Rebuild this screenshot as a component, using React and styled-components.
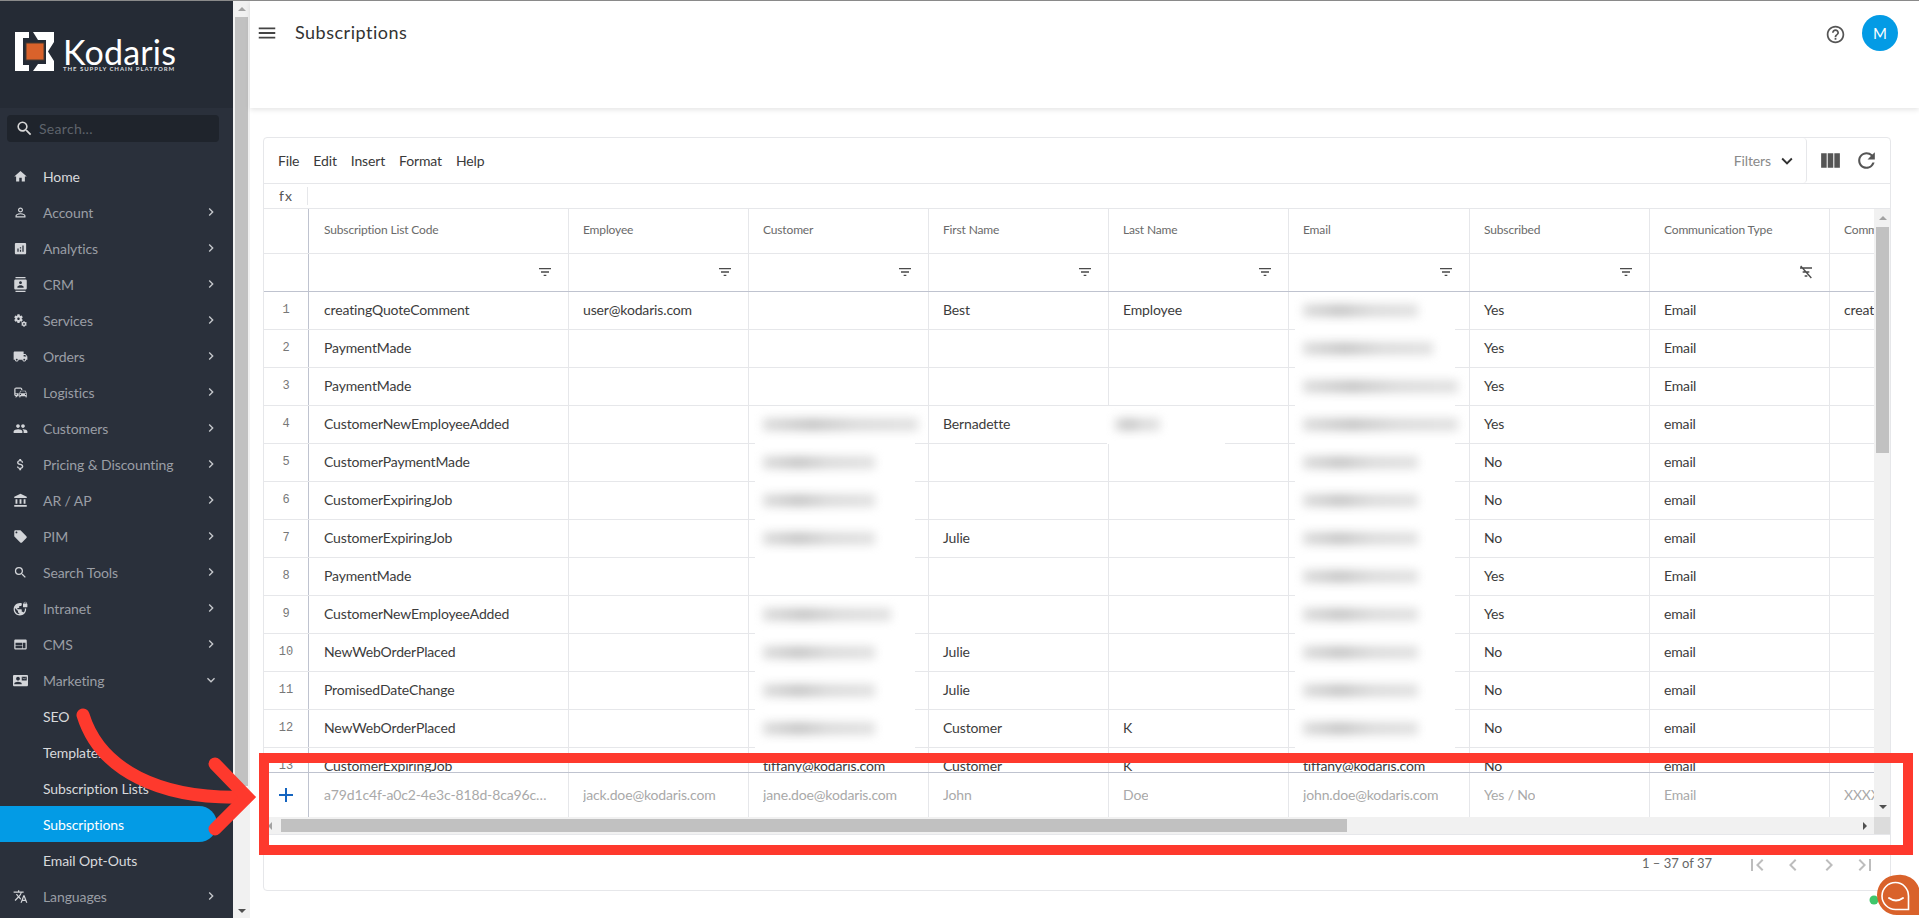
import React from "react";
import styled, { createGlobalStyle } from "styled-components";
import {
  MdHome, MdPermIdentity, MdAnalytics, MdContacts, MdMiscellaneousServices, MdLocalShipping,
  MdCommute, MdPeople, MdAttachMoney, MdAccountBalance, MdLocalOffer, MdSearch, MdVpnLock,
  MdWeb, MdContactMail, MdTranslate, MdKeyboardArrowRight, MdKeyboardArrowDown, MdMenu,
  MdHelpOutline, MdViewColumn, MdRefresh, MdFilterList, MdFirstPage, MdLastPage,
  MdChevronLeft, MdChevronRight, MdExpandMore, MdAdd,
} from "react-icons/md";

const FONT = `Lato, "Noto Sans", sans-serif`;
const LINE = "#e6e7ea";
const STRONG = "#bfc3cf";

const Global = createGlobalStyle`
  html, body { margin: 0; height: 100%; overflow: hidden; background: #fff; }
  body { font-family: ${FONT}; font-size: 14px; color: #333; }
  * { box-sizing: border-box; }
`;

const Page = styled.div`
  position: relative;
  display: flex;
  height: 918px;
  width: 1919px;
  border-top: 1px solid #8a8a8a;
  overflow: hidden;
`;

const Sidebar = styled.aside`
  width: 233px;
  flex: none;
  background: #2a303b;
  display: flex;
  flex-direction: column;
`;
const Brand = styled.div`
  height: 107px;
  background: #252b35;
  padding: 31px 0 0 15px;
  display: flex;
  gap: 8px;
  flex: none;
`;
const BrandText = styled.div`
  display: flex;
  flex-direction: column;
  color: #fff;
`;
const BrandName = styled.span`
  font-size: 34px;
  line-height: 24px;
  margin-top: 8px;
  letter-spacing: 0.2px;
`;
const BrandTag = styled.span`
  font-size: 6px;
  line-height: 6px;
  margin-top: 2px;
  letter-spacing: 0.95px;
  white-space: nowrap;
  color: #d5d7db;
  font-weight: 700;
`;
const SearchBox = styled.div`
  margin: 7px 14px 0 7px;
  height: 27px;
  border-radius: 4px;
  background: #1f242c;
  display: flex;
  align-items: center;
  padding-left: 8px;
  gap: 5px;
  color: #d8d8d8;
  flex: none;
  font-size: 14px;
  span { color: #5e636b; letter-spacing: .3px; }
`;
const Nav = styled.nav`
  margin-top: 16px;
  display: flex;
  flex-direction: column;
`;
const NavRow = styled.div`
  height: 36px;
  display: flex;
  align-items: center;
  padding-left: ${p => (p.$sub ? 43 : 12)}px;
  width: 217px;
  position: relative;
  color: ${p => p.$color};
  background: ${p => (p.$active ? "#039be5" : "transparent")};
  border-radius: 0 18px 18px 0;
  font-size: 14px;
  letter-spacing: -0.1px;
  white-space: nowrap;
`;
const NavIcon = styled.span`
  width: 31px;
  display: flex;
  color: #d3d5d9;
  svg { width: 15px; height: 15px; margin-left: 1px; }
`;
const NavChevron = styled.span`
  position: absolute;
  left: 203px;
  top: 10px;
  display: flex;
  color: #c6c8cc;
`;

const Rail = styled.div`
  width: 17px;
  flex: none;
  background: #f1f1f1;
  display: flex;
  flex-direction: column;
  align-items: center;
  justify-content: space-between;
  position: relative;
`;
const Thumb = styled.div`
  background: #c1c1c1;
  ${p => (p.$horizontal ? "height: 13px;" : "width: 13px;")}
`;
const Arrow = styled.i`
  width: 0;
  height: 0;
  display: block;
  flex: none;
  border-style: solid;
  ${p => {
    const c = p.$muted ? "#a3a3a3" : "#505050";
    if (p.$dir === "up") return `border-width: 0 4px 4px; border-color: transparent transparent ${c};`;
    if (p.$dir === "down") return `border-width: 4px 4px 0; border-color: ${c} transparent transparent;`;
    if (p.$dir === "left") return `border-width: 4px 4px 4px 0; border-color: transparent ${c} transparent transparent;`;
    return `border-width: 4px 0 4px 4px; border-color: transparent transparent transparent ${c};`;
  }}
`;
const RailTop = styled.div`
  display: flex;
  flex-direction: column;
  align-items: center;
  gap: 6px;
  padding-top: 6px;
`;
const RailBottom = styled.div`
  padding-bottom: 5px;
`;

const Main = styled.main`
  flex: 1;
  min-width: 0;
  display: flex;
  flex-direction: column;
`;
const Topbar = styled.header`
  height: 107px;
  flex: none;
  display: flex;
  align-items: flex-start;
  padding: 20px 21px 0 6px;
  box-shadow: 0 2px 5px rgba(0, 0, 0, 0.1);
  position: relative;
`;
const MenuBtn = styled.span`
  display: flex;
  color: #444;
  margin: 0 17px 0 0;
  svg { width: 22px; height: 22px; }
  padding-top: 1px;
`;
const Title = styled.h1`
  margin: -1px 0 0;
  font-size: 18px;
  line-height: 24px;
  font-weight: 400;
  letter-spacing: 0.5px;
  color: #333;
`;
const TopRight = styled.div`
  margin-left: auto;
  display: flex;
  align-items: flex-start;
  gap: 16px;
  margin-top: -6px;
`;
const Help = styled.span`
  display: flex;
  color: #555;
  margin-top: 9px;
  svg { width: 21px; height: 21px; }
`;
const Avatar = styled.div`
  width: 36px;
  height: 36px;
  border-radius: 50%;
  background: #039be5;
  color: #fff;
  display: flex;
  align-items: center;
  justify-content: center;
  font-size: 15px;
`;

const Card = styled.section`
  margin: 29px 28px 0 13px;
  height: 754px;
  border: 1px solid ${LINE};
  border-radius: 4px;
  display: flex;
  flex-direction: column;
  overflow: hidden;
`;
const Toolbar = styled.div`
  height: 46px;
  flex: none;
  display: flex;
  align-items: center;
  border-bottom: 1px solid ${LINE};
`;
const MenuList = styled.div`
  flex: 1;
  display: flex;
  align-items: center;
  gap: 14px;
  padding: 0 0 1px 14px;
  font-size: 14px;
  letter-spacing: -0.15px;
  color: #3a3a3a;
`;
const Filters = styled.div`
  display: flex;
  align-items: center;
  gap: 5px;
  height: 100%;
  padding-right: 8px;
  color: #8a8a8a;
  letter-spacing: -0.1px;
  border-right: 1px solid ${LINE};
  border-radius: 0 4px 4px 0;
  svg { color: #333; }
`;
const ToolIcons = styled.div`
  width: 83px;
  display: flex;
  align-items: center;
  gap: 11px;
  padding-left: 11px;
  color: #555;
  svg { width: 25px; height: 25px; }
`;
const FormulaBar = styled.div`
  height: 25px;
  flex: none;
  display: flex;
  align-items: center;
  border-bottom: 1px solid ${LINE};
`;
const Fx = styled.span`
  width: 44px;
  height: 18px;
  font-size: 14px;
  line-height: 18px;
  padding-left: 15px;
  color: #555;
  border-right: 1px solid ${LINE};
  letter-spacing: 1px;
`;

const GridWrap = styled.div`
  height: 625px;
  flex: none;
  display: grid;
  grid-template-columns: 1610px 17px;
  grid-template-rows: 608px 17px;
`;
const GridView = styled.div`
  display: flex;
  flex-direction: column;
  overflow: hidden;
`;
const Row = styled.div`
  display: flex;
  flex: none;
  height: ${p => p.$h}px;
  border-bottom: 1px solid ${p => (p.$strong ? STRONG : LINE)};
  ${p => p.$topStrong && `border-top: 1px solid ${STRONG};`}
  ${p => p.$flat && "border-bottom: none;"}
`;
const RowsClip = styled.div`
  height: 480px;
  flex: none;
  overflow: hidden;
`;
const NumCell = styled.div`
  width: 45px;
  flex: none;
  border-right: 1px solid ${STRONG};
  display: flex;
  align-items: center;
  justify-content: center;
  padding-bottom: 1px;
  font-size: 12px;
  font-family: "Liberation Mono", monospace;
  color: #777;
  svg { color: #1565c0; width: 24px; height: 24px; }
`;
const Cell = styled.div`
  width: ${p => p.$w}px;
  flex: none;
  position: relative;
  border-right: 1px solid ${LINE};
  padding: 0 15px ${p => (p.$head ? 3 : 2)}px ${p => (p.$first ? 15 : 14)}px;
  display: flex;
  align-items: center;
  font-size: ${p => (p.$head ? 12 : 14)}px;
  letter-spacing: -0.15px;
  color: ${p => (p.$head ? "#6a6a6a" : p.$ghost ? "#a9a9a9" : "#3c3c3c")};
  white-space: nowrap;
  overflow: hidden;
  ${p => p.$blurred && "overflow: visible;"}
  ${p => p.$last && "border-right: none; padding-right: 0;"}
`;
const Ellipsis = styled.span`
  overflow: hidden;
  text-overflow: ${p => (p.$clip ? "clip" : "ellipsis")};
`;
const FilterMark = styled.span`
  position: absolute;
  right: 15px;
  top: 10px;
  display: flex;
  color: #4a4a4a;
  svg { width: 16px; height: 16px; }
`;
const BlurPatch = styled.span`
  position: absolute;
  z-index: 2;
  left: ${p => p.$left}px;
  width: ${p => p.$w}px;
  top: 0;
  height: 38px;
  background: #fff;
  &::after {
    content: "";
    position: absolute;
    left: 8px;
    top: 12px;
    height: 13px;
    width: ${p => p.$ink}px;
    background: linear-gradient(90deg, #c8c8c8, #a2a2a2 32%, #c4c4c4 60%, #cdcdcd);
    opacity: .6;
    filter: blur(5px);
  }
`;

const VBar = styled.div`
  background: #f1f1f1;
  display: flex;
  flex-direction: column;
  align-items: center;
  justify-content: space-between;
`;
const VStart = styled.div`
  display: flex;
  flex-direction: column;
  align-items: center;
  gap: 7px;
  padding-top: 7px;
`;
const VEnd = styled.div`
  padding-bottom: 8px;
`;
const HBar = styled.div`
  background: #f1f1f1;
  display: flex;
  align-items: center;
  gap: 5px;
  padding: 0 7px 0 4px;
  justify-content: space-between;
`;
const HStart = styled.div`
  display: flex;
  align-items: center;
  gap: 9px;
`;
const Corner = styled.div`
  background: #dcdcdc;
`;
const Pager = styled.div`
  flex: 1;
  border-top: 1px solid ${LINE};
  display: flex;
  align-items: center;
  justify-content: flex-end;
  padding: 0 13px 0 0;
  color: #666;
  font-size: 13px;
`;
const PagerLabel = styled.span`
  margin: 0 33px 0 0;
`;
const PagerIcons = styled.div`
  display: flex;
  gap: 12px;
  padding-top: 4px;
  color: #bdbdbd;
  svg { width: 24px; height: 24px; display: block; }
`;

const Overlay = styled.svg`
  position: absolute;
  left: 0;
  top: -1px;
  width: 1919px;
  height: 918px;
  pointer-events: none;
  z-index: 5;
`;
const Chat = styled.svg`
  position: absolute;
  right: 0;
  bottom: 0;
  z-index: 6;
`;

const NAV = [
  [MdHome, "Home", "#d8d9dc", false],
  [MdPermIdentity, "Account", "#9a9ea5", true],
  [MdAnalytics, "Analytics", "#9a9ea5", true],
  [MdContacts, "CRM", "#9a9ea5", true],
  [MdMiscellaneousServices, "Services", "#9a9ea5", true],
  [MdLocalShipping, "Orders", "#9a9ea5", true],
  [MdCommute, "Logistics", "#9a9ea5", true],
  [MdPeople, "Customers", "#9a9ea5", true],
  [MdAttachMoney, "Pricing & Discounting", "#9a9ea5", true],
  [MdAccountBalance, "AR / AP", "#9a9ea5", true],
  [MdLocalOffer, "PIM", "#9a9ea5", true],
  [MdSearch, "Search Tools", "#9a9ea5", true],
  [MdVpnLock, "Intranet", "#9a9ea5", true],
  [MdWeb, "CMS", "#9a9ea5", true],
];
const SUB = [
  ["SEO", "#d8d9dc"],
  ["Templates", "#d8d9dc"],
  ["Subscription Lists", "#d8d9dc"],
  ["Subscriptions", "#ffffff", true],
  ["Email Opt-Outs", "#d8d9dc"],
];

const WIDTHS = [260, 180, 180, 180, 180, 181, 180, 180, 45];
const HEADS = ["Subscription List Code", "Employee", "Customer", "First Name", "Last Name", "Email", "Subscribed", "Communication Type", "Comm"];
// [code, employee, customer, first, last, email, subscribed, type, extra]; numbers are the width of a blurred value
const ROWS = [
  ["creatingQuoteComment", "user@kodaris.com", null, "Best", "Employee", 115, "Yes", "Email", "creat"],
  ["PaymentMade", null, null, null, null, 130, "Yes", "Email"],
  ["PaymentMade", null, null, null, null, 155, "Yes", "Email"],
  ["CustomerNewEmployeeAdded", null, 155, "Bernadette", -45, 155, "Yes", "email"],
  ["CustomerPaymentMade", null, 112, null, null, 115, "No", "email"],
  ["CustomerExpiringJob", null, 112, null, null, 115, "No", "email"],
  ["CustomerExpiringJob", null, 112, "Julie", null, 115, "No", "email"],
  ["PaymentMade", null, null, null, null, 115, "Yes", "Email"],
  ["CustomerNewEmployeeAdded", null, 128, null, null, 115, "Yes", "email"],
  ["NewWebOrderPlaced", null, 112, "Julie", null, 115, "No", "email"],
  ["PromisedDateChange", null, 112, "Julie", null, 115, "No", "email"],
  ["NewWebOrderPlaced", null, 112, "Customer", "K", 115, "No", "email"],
  ["CustomerExpiringJob", null, "tiffany@kodaris.com", "Customer", "K", "tiffany@kodaris.com", "No", "email"],
];
const GHOST = ["a79d1c4f-a0c2-4e3c-818d-8ca96c8f21d0", "jack.doe@kodaris.com", "jane.doe@kodaris.com", "John", "Doe", "john.doe@kodaris.com", "Yes / No", "Email", "XXXXXX"];

const FilterOff = () => (
  <svg viewBox="0 0 24 24" fill="none" stroke="currentColor" strokeWidth="2">
    <path d="M3 6h18M7 12h10M10 18h4M4 3l16 18" />
  </svg>
);

const Logo = () => (
  <svg width="40" height="40" viewBox="0 0 40 40">
    <path fill="#fff" d="M0 0h14v6H8v27h6v6H0z" />
    <path fill="#fff" d="M18 0h21v10l-6 9.5 6 9.5v10H18l5-7h8V8h-8z" />
    <rect x="11" y="11" width="18" height="17" fill="#d9622b" stroke="#4a3a30" strokeWidth="1" />
  </svg>
);

function renderCell(value, i, isLast) {
  if (typeof value === "number") {
    const small = value < 0;
    return (
      <Cell key={i} $w={WIDTHS[i]} $blurred $last={isLast}>
        <BlurPatch $left={small ? -2 : 6} $w={small ? 118 : 160} $ink={Math.abs(value)} />
      </Cell>
    );
  }
  return <Cell key={i} $w={WIDTHS[i]} $first={i === 0} $last={isLast}>{value}</Cell>;
}

export default function App() {
  return (
    <Page>
      <Global />
      <Sidebar>
        <Brand>
          <Logo />
          <BrandText>
            <BrandName>Kodaris</BrandName>
            <BrandTag>THE SUPPLY CHAIN PLATFORM</BrandTag>
          </BrandText>
        </Brand>
        <SearchBox>
          <MdSearch size={19} />
          <span>Search...</span>
        </SearchBox>
        <Nav>
          {NAV.map(([Icon, label, color, more]) => (
            <NavRow key={label} $color={color}>
              <NavIcon><Icon /></NavIcon>
              {label}
              {more && <NavChevron><MdKeyboardArrowRight size={16} /></NavChevron>}
            </NavRow>
          ))}
          <NavRow $color="#9a9ea5">
            <NavIcon><MdContactMail /></NavIcon>
            Marketing
            <NavChevron><MdKeyboardArrowDown size={16} /></NavChevron>
          </NavRow>
          {SUB.map(([label, color, active]) => (
            <NavRow key={label} $sub $color={color} $active={active}>{label}</NavRow>
          ))}
          <NavRow $color="#9a9ea5">
            <NavIcon><MdTranslate /></NavIcon>
            Languages
            <NavChevron><MdKeyboardArrowRight size={16} /></NavChevron>
          </NavRow>
        </Nav>
      </Sidebar>
      <Rail>
        <RailTop>
          <Arrow $dir="up" $muted />
          <Thumb style={{ height: 769 }} />
        </RailTop>
        <RailBottom><Arrow $dir="down" /></RailBottom>
      </Rail>
      <Main>
        <Topbar>
          <MenuBtn><MdMenu /></MenuBtn>
          <Title>Subscriptions</Title>
          <TopRight>
            <Help><MdHelpOutline /></Help>
            <Avatar>M</Avatar>
          </TopRight>
        </Topbar>
        <Card>
          <Toolbar>
            <MenuList>
              <span>File</span><span>Edit</span><span>Insert</span><span>Format</span><span>Help</span>
            </MenuList>
            <Filters>Filters <MdExpandMore size={22} /></Filters>
            <ToolIcons><MdViewColumn /><MdRefresh /></ToolIcons>
          </Toolbar>
          <FormulaBar><Fx>fx</Fx></FormulaBar>
          <GridWrap>
            <GridView>
              <Row $h={45}>
                <NumCell />
                {HEADS.map((h, i) => (
                  <Cell key={h} $w={WIDTHS[i]} $head $first={i === 0} $last={i === 8}>{h}</Cell>
                ))}
              </Row>
              <Row $h={38} $strong>
                <NumCell />
                {WIDTHS.map((w, i) => (
                  <Cell key={i} $w={w} $last={i === 8}>
                    {i < 8 && <FilterMark>{i === 7 ? <FilterOff /> : <MdFilterList />}</FilterMark>}
                  </Cell>
                ))}
              </Row>
              <RowsClip>
                {ROWS.map((r, n) => (
                  <Row key={n} $h={38}>
                    <NumCell>{n + 1}</NumCell>
                    {WIDTHS.map((_, i) => renderCell(r[i] ?? null, i, i === 8))}
                  </Row>
                ))}
              </RowsClip>
              <Row $h={45} $topStrong $flat>
                <NumCell><MdAdd /></NumCell>
                {GHOST.map((g, i) => (
                  <Cell key={i} $w={WIDTHS[i]} $ghost $first={i === 0} $last={i === 8}>
                    <Ellipsis $clip={i === 8}>{g}</Ellipsis>
                  </Cell>
                ))}
              </Row>
            </GridView>
            <VBar>
              <VStart>
                <Arrow $dir="up" $muted />
                <Thumb style={{ height: 226 }} />
              </VStart>
              <VEnd><Arrow $dir="down" /></VEnd>
            </VBar>
            <HBar>
              <HStart>
                <Arrow $dir="left" $muted />
                <Thumb $horizontal style={{ width: 1066 }} />
              </HStart>
              <Arrow $dir="right" />
            </HBar>
            <Corner />
          </GridWrap>
          <Pager>
            <PagerLabel>1 – 37 of 37</PagerLabel>
            <PagerIcons>
              <MdFirstPage /><MdChevronLeft /><MdChevronRight /><MdLastPage />
            </PagerIcons>
          </Pager>
        </Card>
      </Main>
      <Overlay viewBox="0 0 1919 918">
        <rect x="264" y="758" width="1644" height="92" fill="none" stroke="#fe392d" strokeWidth="10" />
        <path d="M83 715C100 770 160 800 246 797" fill="none" stroke="#fe392d" strokeWidth="13" strokeLinecap="round" />
        <path d="M215 764L247 797L215 829" fill="none" stroke="#fe392d" strokeWidth="13" strokeLinecap="round" strokeLinejoin="miter" />
      </Overlay>
      <Chat width="50" height="44" viewBox="0 0 50 44">
        <circle cx="5" cy="26" r="6.5" fill="#fff" />
        <circle cx="5" cy="26" r="4.5" fill="#3fc66b" />
        <path d="M28 1A20 20 0 0 0 8 21A20 20 0 0 0 28 41H50V14A20 20 0 0 0 28 1Z" fill="#d9622b" />
        <path d="M26.5 8.5a13.5 13.5 0 1 0 0 27H39.5V22a13 13.5 0 0 0-13-13.5z" fill="none" stroke="#fff" strokeWidth="1.6" />
        <path d="M20 24q7 5 14 0" fill="none" stroke="#fff" strokeWidth="2" strokeLinecap="round" />
      </Chat>
    </Page>
  );
}
